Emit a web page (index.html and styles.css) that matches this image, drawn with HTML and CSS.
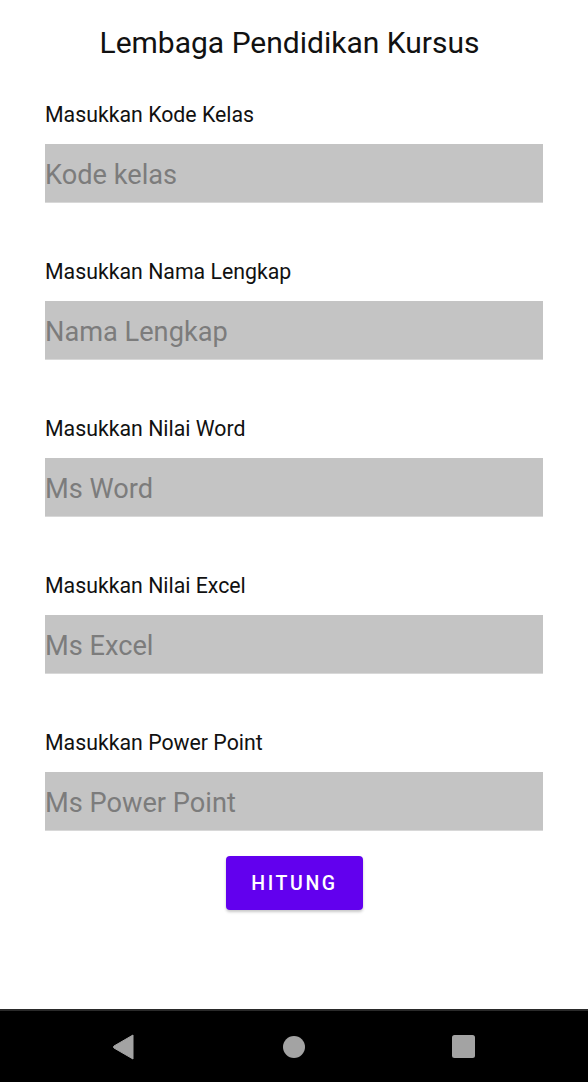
FILE: index.html
```html
<!DOCTYPE html>
<html lang="id">
<head>
<meta charset="utf-8">
<title>Lembaga Pendidikan Kursus</title>
<link rel="stylesheet" href="styles.css">
</head>
<body>
<div class="screen">
  <main class="content">
    <h1 class="title">Lembaga Pendidikan Kursus</h1>
    <form class="form">
      <div class="field">
        <label class="label">Masukkan Kode Kelas</label>
        <input class="input" type="text" placeholder="Kode kelas">
      </div>
      <div class="field">
        <label class="label">Masukkan Nama Lengkap</label>
        <input class="input" type="text" placeholder="Nama Lengkap">
      </div>
      <div class="field">
        <label class="label">Masukkan Nilai Word</label>
        <input class="input" type="text" placeholder="Ms Word">
      </div>
      <div class="field">
        <label class="label">Masukkan Nilai Excel</label>
        <input class="input" type="text" placeholder="Ms Excel">
      </div>
      <div class="field last">
        <label class="label">Masukkan Power Point</label>
        <input class="input" type="text" placeholder="Ms Power Point">
      </div>
      <div class="actions">
        <button class="button" type="button">HITUNG</button>
      </div>
    </form>
  </main>
  <nav class="navbar">
    <svg class="nav-icon" width="22" height="26" viewBox="0 0 22 26"><path d="M20 1 L20 25 L1 14 Q0 13 1 12 Z" fill="#a3a3a3" stroke="#a3a3a3" stroke-width="1" stroke-linejoin="round"/></svg>
    <svg class="nav-icon" width="22" height="22" viewBox="0 0 22 22"><circle cx="11" cy="11" r="11" fill="#a3a3a3"/></svg>
    <svg class="nav-icon" width="23" height="23" viewBox="0 0 23 23"><rect x="0" y="0" width="23" height="23" rx="2.5" fill="#a3a3a3"/></svg>
  </nav>
</div>
</body>
</html>
```

FILE: styles.css
```css
* { box-sizing: border-box; }
html, body { margin: 0; padding: 0; background: #ffffff; }
body { font-family: Roboto, "Noto Sans", "Liberation Sans", sans-serif; color: #000; }

.screen {
  width: 588px;
  height: 1082px;
  display: flex;
  flex-direction: column;
}
.content {
  flex: 1;
  padding: 26px 45px 0 45px;
}
.title {
  margin: 0;
  padding-right: 9px;
  font-size: 30px;
  line-height: 34px;
  font-weight: 400;
  text-align: center;
  color: #111;
}
.form {
  margin-top: 43px;
  display: flex;
  flex-direction: column;
}
.field {
  display: flex;
  flex-direction: column;
  margin-bottom: 57px;
}
.field.last { margin-bottom: 25px; }
.label {
  font-size: 21.3px;
  line-height: 24px;
  color: #111;
}
.input {
  margin-top: 17px;
  height: 59px;
  width: 498px;
  border: none;
  outline: none;
  background: #c4c4c4;
  padding: 4px 0 0 0;
  font-family: Roboto, "Noto Sans", sans-serif;
  font-size: 27.2px;
  color: #000;
  border-bottom: 1px solid #d8d8d8;
}
.input::placeholder { color: #7c7c7c; }
.actions {
  display: flex;
  justify-content: center;
}
.button {
  width: 137px;
  height: 54px;
  background: #6200ee;
  color: #fff;
  border: none;
  border-radius: 4px;
  font-family: Roboto, sans-serif;
  font-weight: 500;
  font-size: 19.5px;
  letter-spacing: 2.6px;
  box-shadow: 0 2px 3px rgba(0,0,0,0.22);
  padding: 0 0 0 1px;
}
.navbar {
  height: 73px;
  background: #000;
  border-top: 2px solid #2a2a2a;
  display: flex;
  align-items: center;
  justify-content: space-between;
  padding: 0 113px 0 113px;
}
.nav-icon { display: block; }
```
